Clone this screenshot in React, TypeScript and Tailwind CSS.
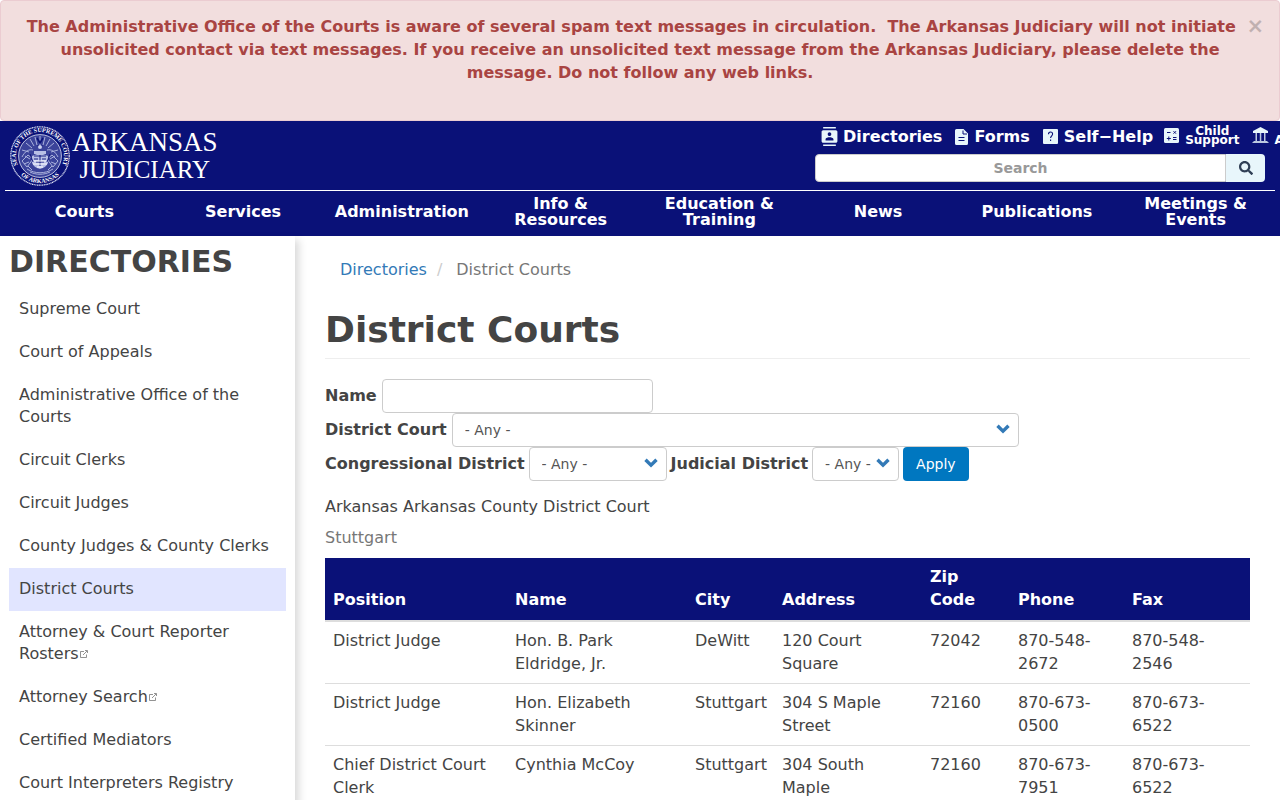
import { useState } from 'react'
import { MdContacts } from 'react-icons/md'
import { FaSearch } from 'react-icons/fa'

const mainMenu = ['Courts', 'Services', 'Administration', 'Info & Resources', 'Education & Training', 'News', 'Publications', 'Meetings & Events']

const sideMenu = [
  { label: 'Supreme Court' },
  { label: 'Court of Appeals' },
  { label: 'Administrative Office of the Courts' },
  { label: 'Circuit Clerks' },
  { label: 'Circuit Judges' },
  { label: 'County Judges & County Clerks' },
  { label: 'District Courts', active: true },
  { label: 'Attorney & Court Reporter Rosters', external: true },
  { label: 'Attorney Search', external: true },
  { label: 'Certified Mediators' },
  { label: 'Court Interpreters Registry' },
]

const columns = [
  { label: 'Position', width: 'w-[182px]' },
  { label: 'Name', width: 'w-[180px]' },
  { label: 'City', width: 'w-[87px]' },
  { label: 'Address', width: 'w-[148px]' },
  { label: 'Zip Code', width: 'w-[88px]' },
  { label: 'Phone', width: 'w-[114px]' },
  { label: 'Fax', width: '' },
]

const rows = [
  ['District Judge', 'Hon. B. Park Eldridge, Jr.', 'DeWitt', '120 Court Square', '72042', '870-548-2672', '870-548-2546'],
  ['District Judge', 'Hon. Elizabeth Skinner', 'Stuttgart', '304 S Maple Street', '72160', '870-673-0500', '870-673-6522'],
  ['Chief District Court Clerk', 'Cynthia McCoy', 'Stuttgart', '304 South Maple', '72160', '870-673-7951', '870-673-6522'],
]

function Seal() {
  return (
    <svg viewBox="0 0 60 60" className="h-[60px] w-[60px] shrink-0" aria-hidden="true">
      <defs>
        <path id="ringTop" d="M9.500 42.500A24 24 0 1 1 50.500 42.500" />
        <path id="ringBottom" d="M9 47A27 27 0 0 0 51 47" />
      </defs>
      <circle cx="30" cy="30" r="29.2" fill="none" stroke="#dfe3f5" strokeWidth="1.2" strokeDasharray="1.2 .5" />
      <circle cx="30" cy="30" r="21.4" fill="#3b439a" stroke="#dfe3f5" strokeWidth=".8" />
      <text fill="#fff" fontSize="6" fontWeight="bold" fontFamily="Liberation Serif, serif">
        <textPath href="#ringTop" startOffset="50%" textAnchor="middle">SEAL OF THE SUPREME COURT</textPath>
      </text>
      <text fill="#fff" fontSize="6" fontWeight="bold" fontFamily="Liberation Serif, serif">
        <textPath href="#ringBottom" startOffset="50%" textAnchor="middle">OF ARKANSAS</textPath>
      </text>
      <g stroke="#aab1dc" strokeWidth="1" fill="none">
        <path d="M30 10v9M25 11l2 8M35 11l-2 8M20 13l4 7M40 13l-4 7M16 17l6 5M44 17l-6 5M12 24l7 2M48 24l-7 2" />
        <path d="M12 31c3-6 7-8 11-7M48 31c-3-6-7-8-11-7M12 35l6-6 5 4-6 8zM48 35l-6-6-5 4 6 8zM15 30l5 3M45 30l-5 3M14 38l5-2M46 38l-5-2" />
        <path d="M17 43c8 5 18 5 26 0M20 46c6 3 14 3 20 0M18 40l4 4M42 40l-4 4" />
      </g>
      <path d="M27 12l3 5 3-5M28 19l2 3 2-3" fill="none" stroke="#0a1178" strokeWidth="1.6" />
      <circle cx="30" cy="21" r="2" fill="#c9cfee" />
      <path d="M24 25h12v3H24zM22 30l5-2h6l5 2v7c-2 4-5 5-8 6-3-1-6-2-8-6z" fill="#b9c0e6" />
      <path d="M24 30h12M24 33h4M32 33h4M26 36h8M30 29v11M20 28l3 8M40 28l-3 8" stroke="#0a1178" strokeWidth=".9" />
      <path d="M24 35h12M23 38h14M27 41h6" stroke="#fff" strokeWidth="1.2" />
    </svg>
  )
}

function FormsIcon() {
  return (
    <svg viewBox="0 0 13 16" className="h-4 w-[13px]" aria-hidden="true">
      <path fill="#e8f6fb" d="M1.500 0H8.500L13 4.500v10a1.500 1.500 0 0 1-1.500 1.500h-10A1.500 1.500 0 0 1 0 14.500v-13A1.500 1.500 0 0 1 1.500 0z" />
      <path d="M8 1.500V5h4M3.500 8.500h6M3.500 11.500h6" fill="none" stroke="#0a1178" />
    </svg>
  )
}

function HelpIcon() {
  return (
    <svg viewBox="0 0 15 15" className="h-[15px] w-[15px]" aria-hidden="true">
      <rect width="15" height="15" rx="1" fill="#e8f6fb" />
      <path d="M5.500 5.200C5.500 3.800 6.300 3 7.500 3s2.100.8 2.100 2c0 1.700-2 1.900-2 4M7.600 10.500v1.500" fill="none" stroke="#0a1178" strokeWidth="1.100" />
    </svg>
  )
}

function CalculatorIcon() {
  return (
    <svg viewBox="0 0 15 15" className="h-[15px] w-[15px]" aria-hidden="true">
      <rect width="15" height="15" rx="1.500" fill="#e8f6fb" />
      <path d="M3 4.500h3.500M9.500 3.200L12 5.700M12 3.200L9.500 5.700M2.800 10.500h4M4.800 8.500v4M9 9.500h3.500M9 11.500h3.500" fill="none" stroke="#0a1178" />
    </svg>
  )
}

function CourthouseIcon() {
  return (
    <svg viewBox="0 0 17 17" className="h-[17px] w-[17px]" fill="#e8f6fb" aria-hidden="true">
      <path d="M8.500 0L16 4v2H1V4z" />
      <path d="M3.500 6H5v8H3.500zM7.800 6h1.500v8H7.800zM12 6h1.500v8H12zM1.500 14h14v1h-14zM.5 15h16v1H.5z" opacity=".8" />
    </svg>
  )
}

function ExternalIcon() {
  return (
    <svg viewBox="0 0 8 8" className="mb-px ml-px inline h-2 w-2 align-baseline" fill="none" stroke="#777" strokeWidth=".8" aria-hidden="true">
      <path d="M4 1.500H.5v6h6V4.500M3 5l4-4M5 .5h2.500V3" />
    </svg>
  )
}

function AnySelect({ id, className }: { id: string; className: string }) {
  return (
    <span className={`relative inline-block max-w-full ${className}`}>
      <select id={id} className="h-[34px] w-full appearance-none rounded border border-[#ccc] bg-white pl-3 text-sm text-[#555]">
        <option>- Any -</option>
      </select>
      <svg viewBox="0 0 14 10" className="pointer-events-none absolute top-[11px] right-[9px] h-[10px] w-[14px]" aria-hidden="true">
        <path d="M1.500 1.800L7 7.200l5.500-5.400" fill="none" stroke="#337ab7" strokeWidth="3.400" />
      </svg>
    </span>
  )
}

export default function App() {
  const [alertOpen, setAlertOpen] = useState(true)

  return (
    <div className="overflow-hidden bg-white font-['DejaVu_Sans',sans-serif] text-base leading-[23px] text-[#444]">
      {alertOpen && (
        <div role="alert" className="rounded border border-[#ebccd1] bg-[#f2dede] px-[15px] pt-[14px] pb-9 text-center font-bold text-[#a94442]">
          <button
            type="button"
            aria-label="Close"
            onClick={() => setAlertOpen(false)}
            className="float-right pt-px text-[21px] leading-[21px] text-black opacity-20"
          >
            ×
          </button>
          The Administrative Office of the Courts is aware of several spam text messages in circulation. &nbsp;The Arkansas Judiciary will not
          initiate unsolicited contact via text messages. If you receive an unsolicited text message from the Arkansas Judiciary, please
          delete the message. Do not follow any web links.
        </div>
      )}

      <header className="bg-[#0a1178] px-[5px] font-bold text-white">
        <div className="flex justify-between border-b border-white pb-1">
          <a href="#" className="flex gap-[2px] pt-[5px] pl-[5px]">
            <Seal />
            <span className="flex flex-col items-center pt-[3px] font-['Liberation_Serif',serif] text-[27px] leading-[27px] font-normal">
              <span>ARKANSAS</span>
              <span className="text-[25px]">JUDICIARY</span>
            </span>
          </a>
          <div className="mr-[10px] w-[450px]">
            <nav className="flex h-[33px] items-center pb-[2px] pl-[5px] whitespace-nowrap">
              <a href="#" className="flex items-center gap-1">
                <MdContacts className="h-[19px] w-[19px] text-[#e8f6fb]" />
                Directories
              </a>
              <a href="#" className="ml-[13px] flex items-center gap-[6px]">
                <FormsIcon />
                Forms
              </a>
              <a href="#" className="ml-[13px] flex items-center gap-[6px]">
                <HelpIcon />
                Self−Help
              </a>
              <a href="#" className="ml-[11px] flex items-center gap-[6px] pb-[2px]">
                <CalculatorIcon />
                <span className="text-center text-xs leading-[9px]">
                  Child
                  <br />
                  Support
                </span>
              </a>
              <a href="#" className="ml-[13px] flex items-center gap-[5px] pb-[2px]">
                <CourthouseIcon />
                <span className="pt-[10px] text-xs leading-[9px]">A</span>
              </a>
            </nav>
            <form className="flex" onSubmit={(e) => e.preventDefault()}>
              <input
                type="text"
                aria-label="Search"
                placeholder="Search"
                className="h-7 min-w-0 flex-1 rounded-l border border-[#ccc] bg-white px-3 text-center text-sm font-bold text-[#555] placeholder:text-[#999]"
              />
              <button type="submit" aria-label="Submit search" className="flex w-[39px] items-center justify-center rounded-r bg-[#e8f6fb] text-[#2f3f55]">
                <FaSearch className="h-[14px] w-[14px]" />
              </button>
            </form>
          </div>
        </div>
        <nav className="grid h-[45px] grid-cols-8 items-center pb-1 text-center leading-4">
          {mainMenu.map((item) => (
            <a key={item} href="#" className="px-3">{item}</a>
          ))}
        </nav>
      </header>

      <div className="flex">
        <aside className="w-[295px] shrink-0 px-[9px] shadow-[4px_4px_8px_rgba(0,0,0,0.15)]">
          <h2 className="pt-[9px] pb-[10px] text-[30px] leading-[33px] font-bold">DIRECTORIES</h2>
          <ul>
            {sideMenu.map((item) => (
              <li key={item.label}>
                <a href="#" className={`block px-[10px] pt-[10px] pb-[11px] leading-[22px] ${item.active ? 'bg-[#e1e5ff]' : ''}`}>
                  {item.label}
                  {item.external && <ExternalIcon />}
                </a>
              </li>
            ))}
          </ul>
        </aside>

        <main className="min-w-0 flex-1 px-[30px]">
          <ol className="flex px-[15px] pt-[22px]">
            <li>
              <a href="#" className="text-[#337ab7]">Directories</a>
            </li>
            <li className="text-[#777]">
              <span className="px-[10px] text-[#ccc]">/</span>
              <span className="pl-1">District Courts</span>
            </li>
          </ol>
          <h1 className="mt-[29px] border-b border-[#eee] pb-2 text-4xl leading-10 font-bold">District Courts</h1>

          <form className="mt-5" onSubmit={(e) => e.preventDefault()}>
            <div className="flex items-center gap-[5px]">
              <label htmlFor="name" className="pb-[2px] font-bold">Name</label>
              <input id="name" type="text" className="h-[34px] w-[271px] rounded border border-[#ccc] px-3 text-sm" />
            </div>
            <div className="flex items-center gap-[5px]">
              <label htmlFor="court" className="pb-[2px] font-bold">District Court</label>
              <AnySelect id="court" className="w-[567px]" />
            </div>
            <div className="flex flex-wrap items-center gap-x-1">
              <label htmlFor="congressional" className="pb-[2px] font-bold">Congressional District</label>
              <AnySelect id="congressional" className="w-[138px]" />
              <label htmlFor="judicial" className="pb-[2px] font-bold">Judicial District</label>
              <AnySelect id="judicial" className="w-[87px]" />
              <button type="submit" className="h-[34px] rounded bg-[#0077c0] px-[13px] text-sm text-white">Apply</button>
            </div>
          </form>

          <p className="mt-[14px]">Arkansas Arkansas County District Court</p>
          <table className="mt-2 w-full table-fixed text-left">
            <caption className="pb-[9px] text-left text-[#777]">Stuttgart</caption>
            <thead className="border-b-2 border-[#ddd] bg-[#0a1178] text-white">
              <tr>
                {columns.map((col) => (
                  <th key={col.label} scope="col" className={`px-2 pt-[7px] pb-[9px] align-bottom font-bold ${col.width}`}>
                    {col.label}
                  </th>
                ))}
              </tr>
            </thead>
            <tbody>
              {rows.map((row, i) => (
                <tr key={i} className="border-b border-[#ddd]">
                  {row.map((cell, j) => (
                    <td key={j} className="px-2 pt-[7px] pb-2 align-top">{cell}</td>
                  ))}
                </tr>
              ))}
            </tbody>
          </table>
        </main>
      </div>
    </div>
  )
}
